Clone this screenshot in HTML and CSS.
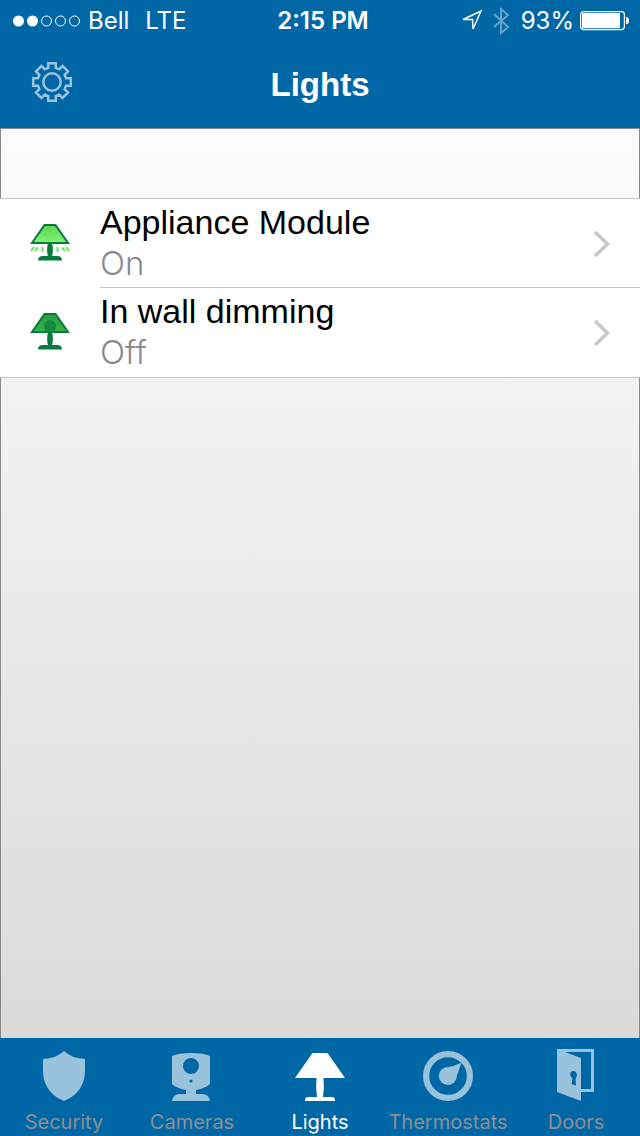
FILE: index.html
```html
<!DOCTYPE html>
<html lang="en">
<head>
<meta charset="utf-8">
<meta name="viewport" content="width=device-width">
<title>Lights</title>
<link rel="stylesheet" href="styles.css">
</head>
<body>
<div class="app">
  <header class="header">
    <div class="status">
      <div class="status-side">
        <svg class="signal" width="68" height="12" viewBox="0 0 68 12" aria-hidden="true">
          <g fill="#fff"><circle cx="6.500" cy="6" r="5.500"/><circle cx="20.500" cy="6" r="5.500"/></g>
          <g fill="none" stroke="#fff"><circle cx="34.500" cy="6" r="5"/><circle cx="48.500" cy="6" r="5"/><circle cx="62.500" cy="6" r="5"/></g>
        </svg>
        <span>Bell</span>
        <span class="network">LTE</span>
      </div>
      <time class="clock">2:15 PM</time>
      <div class="status-side status-end">
        <svg width="22" height="22" viewBox="0 0 22 22" aria-hidden="true"><path d="M2 9.500 20 1 12 19 11.500 9.500Z" fill="none" stroke="#fff" stroke-width="1.400"/></svg>
        <svg class="bluetooth" width="16" height="28" viewBox="0 0 16 28" aria-hidden="true"><path d="M1 7 15 20 8 26V2L15 8 1 20" fill="none" stroke="#66a3cb" stroke-width="2"/></svg>
        <span>93%</span>
        <svg width="48" height="20" viewBox="0 0 48 20" aria-hidden="true"><rect x=".6" y=".6" width="43.800" height="18" rx="3" fill="none" stroke="#fff" stroke-width="1.200"/><rect x="2" y="2" width="38" height="15.300" rx="1" fill="#fff"/><path d="M46 6q3 0 3 3.600T46 13.200Z" fill="#fff"/></svg>
      </div>
    </div>
    <div class="navbar">
      <button class="settings" type="button" aria-label="Settings">
        <svg width="40" height="40" viewBox="-20 -20 40 40" fill="none" stroke="#99c2dc" stroke-width="2.500" aria-hidden="true">
          <circle r="8.700"/>
          <path d="M-3.800-14V-18.800H3.800V-14L7.200-12.600 10.600-16 16-10.600 12.600-7.200 14-3.800H18.800V3.800H14L12.600 7.200 16 10.600 10.600 16 7.200 12.600 3.800 14V18.800H-3.800V14L-7.200 12.600-10.600 16-16 10.600-12.600 7.200-14 3.800H-18.800V-3.800H-14L-12.600-7.200-16-10.600-10.600-16-7.200-12.600Z"/>
        </svg>
      </button>
      <h1 class="title">Lights</h1>
    </div>
  </header>

  <main class="content">
    <ul class="devices">
      <li><a class="device" href="#appliance">
        <svg class="lamp" width="40" height="40" viewBox="0 0 40 40" aria-hidden="true">
          <defs><linearGradient id="lit" x2="0" y2="1"><stop stop-color="#5bd354"/><stop offset="1" stop-color="#7ff576"/></linearGradient></defs>
          <path d="M18 20h4q2 8-.5 15h-3Q16 28 18 20Z" fill="#077a3d"/>
          <path d="M8 37.500Q8 33 13 33H27Q32 33 32 37.500Z" fill="#077a3d"/>
          <path d="M14.500 2H25.500L38 20H2Z" fill="url(#lit)" stroke="#077a3d" stroke-width="2"/>
          <path d="M12.500 24v5M27.500 24v5M8 24.500l-3 3.500M32 24.500l3 3.500M4 24l-3 4M36 24l3 4" fill="none" stroke="#6ce866" stroke-width="2.200"/>
        </svg>
        <span class="device-text"><span class="device-name">Appliance Module</span><span class="device-state">On</span></span>
        <svg class="chevron" width="18" height="28" viewBox="0 0 18 28" aria-hidden="true"><path d="M2 2 14.500 14 2 26" fill="none" stroke="#c7c7cc" stroke-width="3.500"/></svg>
      </a></li>
      <li><a class="device" href="#dimming">
        <svg class="lamp" width="40" height="40" viewBox="0 0 40 40" aria-hidden="true">
          <defs><linearGradient id="unlit" x2="0" y2="1"><stop stop-color="#249d42"/><stop offset="1" stop-color="#38b446"/></linearGradient></defs>
          <path d="M18 20h4q2 8-.5 15h-3Q16 28 18 20Z" fill="#077a3d"/>
          <path d="M8 37.500Q8 33 13 33H27Q32 33 32 37.500Z" fill="#077a3d"/>
          <path d="M14.500 2H25.500L38 20H2Z" fill="url(#unlit)" stroke="#077a3d" stroke-width="2"/>
          <path d="M16 20Q14 17 14 14a6 6 0 0 1 12 0Q26 17 24 20Z" fill="#148a40"/>
        </svg>
        <span class="device-text"><span class="device-name">In wall dimming</span><span class="device-state">Off</span></span>
        <svg class="chevron" width="18" height="28" viewBox="0 0 18 28" aria-hidden="true"><path d="M2 2 14.500 14 2 26" fill="none" stroke="#c7c7cc" stroke-width="3.500"/></svg>
      </a></li>
    </ul>
  </main>

  <nav class="tabs" aria-label="Main">
    <a class="tab" href="#security">
      <svg width="52" height="54" viewBox="0 0 52 54" aria-hidden="true"><path d="M26 1Q34 8.500 47 9V21C47 35 39 46 26 51 13 46 5 35 5 21V9Q18 8.500 26 1Z"/></svg>
      <span>Security</span></a>
    <a class="tab" href="#cameras">
      <svg width="52" height="54" viewBox="0 0 52 54" aria-hidden="true"><path fill-rule="evenodd" d="M6 6Q12 3 25 3T44 6V34Q40 38 30 40V44H36Q43 44 44 51H6Q7 44 14 44H20V40Q10 38 6 34ZM17 16a8 8 0 1 0 16 0a8 8 0 1 0-16 0ZM23.400 31a1.600 1.600 0 1 0 3.200 0a1.600 1.600 0 1 0-3.200 0Z"/></svg>
      <span>Cameras</span></a>
    <a class="tab tab-active" href="#lights" aria-current="page">
      <svg width="52" height="54" viewBox="0 0 52 54" aria-hidden="true"><path d="M18.500 3H33.500L51 28H29.500Q30.500 38 29 47H38Q41 47 41 51H11Q11 47 14 47H23Q21.500 38 22.500 28H1Z"/></svg>
      <span>Lights</span></a>
    <a class="tab" href="#thermostats">
      <svg width="52" height="54" viewBox="0 0 52 54" aria-hidden="true"><circle cx="26" cy="26" r="21.900" fill="none" stroke="#99c2dc" stroke-width="6.200"/><path d="M39.500 12.500 34.800 26a9 9 0 1 1-8.800-9Q30 17 39.500 12.500Z"/></svg>
      <span>Thermostats</span></a>
    <a class="tab" href="#doors">
      <svg width="52" height="54" viewBox="0 0 52 54" aria-hidden="true"><path fill-rule="evenodd" d="M7-1H44V42H31V51L7 42ZM15 2 31 8V39H41V2ZM23.500 21C19 21 19.500 27 22.500 28L21.500 34 26 35.500 25.500 29C28 26 27 21 23.500 21Z"/></svg>
      <span>Doors</span></a>
  </nav>
</div>
</body>
</html>
```
FILE: styles.css
```css
* {
  box-sizing: border-box;
}

body {
  margin: 0;
  font-family: Inter, "Liberation Sans", sans-serif;
}

svg {
  display: block;
  flex: none;
  overflow: visible;
}

a {
  color: inherit;
  text-decoration: none;
}

.app {
  display: flex;
  flex-direction: column;
  min-height: 100vh;
}

.header {
  background: #0067a6;
  color: #fff;
}

.status {
  display: grid;
  grid-template-columns: 1fr auto 1fr;
  align-items: center;
  height: 42px;
  padding: 0 12px;
  font-size: 24px;
  line-height: 42px;
}

.status-side {
  display: flex;
  align-items: center;
  gap: 8px;
}

.network {
  margin-left: 8px;
}

.status-end {
  justify-content: flex-end;
  gap: 6px;
}

.bluetooth {
  margin: 0 6px 0 4px;
}

.clock {
  padding-left: 6px;
  font-weight: 600;
}

.navbar {
  display: grid;
  grid-template-columns: 1fr auto 1fr;
  align-items: center;
  height: 86px;
  padding: 0 32px;
}

.settings {
  justify-self: start;
  padding: 0;
  margin-bottom: 6px;
  border: 0;
  background: none;
}

.title {
  margin: 0;
  font: bold 33px/40px "Liberation Sans", Arial, sans-serif;
}

.content {
  flex: 1;
  padding-top: 69px;
  border: 1px solid #888;
  border-bottom: 0;
  background: linear-gradient(#fcfcfc, #dadada);
}

.devices {
  margin: 0 -1px;
  padding: 0;
  border: solid #c8c7cc;
  border-width: 1px 0;
  background: #fff;
  list-style: none;
}

.device {
  display: flex;
  height: 89px;
  padding-left: 30px;
}

.devices li:not(:last-child) {
  background: linear-gradient(#c8c7cc, #c8c7cc) 100px 100% / 100% 1px no-repeat;
}

.lamp {
  margin: 24px 30px 0 0;
}

.device-text {
  flex: 1;
  padding-top: 3px;
}

.device-name,
.device-state {
  display: block;
  line-height: 41px;
}

.device-name {
  color: #000;
  font-family: "Liberation Sans", Arial, sans-serif;
  font-size: 34px;
}

.device-state {
  color: #8a8a8a;
  font-size: 33px;
  font-weight: 300;
}

.chevron {
  align-self: center;
  margin-right: 29px;
}

.tabs {
  display: grid;
  grid-template-columns: repeat(5, 1fr);
  height: 98px;
  background: #0067a6;
}

.tab {
  display: flex;
  flex-direction: column;
  align-items: center;
  gap: 6px;
  padding-top: 12px;
  color: #8e8e93;
  fill: #99c2dc;
  font-size: 20px;
  line-height: 24px;
}

.tab-active {
  color: #fff;
  fill: #fff;
}
```
